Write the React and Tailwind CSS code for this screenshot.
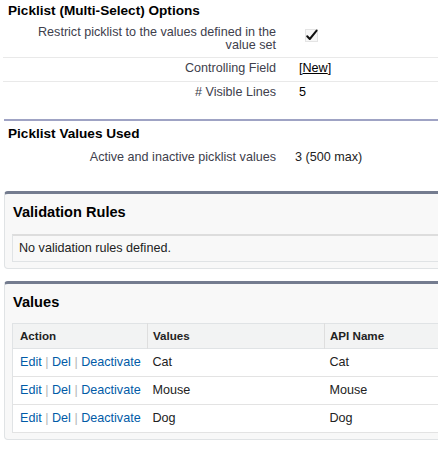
const LINK = "text-[#015ba7]";

const OPTION_ROWS = [
  { label: ["Restrict picklist to the values defined in the", "value set"], value: "check" },
  { label: ["Controlling Field"], value: "new" },
  { label: ["# Visible Lines"], value: "5" },
];

const VALUES = [
  { value: "Cat", api: "Cat" },
  { value: "Mouse", api: "Mouse" },
  { value: "Dog", api: "Dog" },
];

function CheckedBox() {
  return (
    <svg width="15" height="15" viewBox="0 0 15 15" className="block">
      <rect x="1.5" y="1.5" width="12" height="12" fill="#f7f7f7" stroke="#e4e4e4" />
      <path d="M3.2 8.2 L5.8 11 L12.6 2.6" fill="none" stroke="#111" strokeWidth="2" strokeLinecap="round" strokeLinejoin="round" />
    </svg>
  );
}

function OptionValue({ value }) {
  if (value === "check") {
    return (
      <div className="ml-[5px] mt-[4px]">
        <CheckedBox />
      </div>
    );
  }
  if (value === "new") {
    return (
      <span>
        [<span className="underline">New</span>]
      </span>
    );
  }
  return <span>{value}</span>;
}

function BoxTitle({ children }) {
  return <h2 className="pl-[8px] pt-[9px] text-[14.6px] leading-[18px] font-bold text-black">{children}</h2>;
}

export default function App() {
  return (
    <div className="w-[438px] h-[449px] overflow-hidden bg-white font-['Liberation_Sans',Arial,sans-serif]">
      {/* Picklist options */}
      <h3 className="pl-[8px] pt-[2px] text-[13.6px] leading-[18px] font-bold text-black">
        Picklist (Multi-Select) Options
      </h3>
      <div className="ml-[3px] mt-[1px]">
        {OPTION_ROWS.map((row, i) => (
          <div
            key={i}
            className={`grid grid-cols-[280px_1fr] ${i < OPTION_ROWS.length - 1 ? "border-b border-[#e9e9e9]" : ""}`}
          >
            <div
              className={`pr-[7px] text-right text-[12.6px] leading-[13px] text-[#40404c] ${
                i === 0 ? "pt-[5px] pb-[5px]" : "pt-[4px] pb-[6px]"
              }`}
            >
              {row.label.map((l) => (
                <div key={l}>{l}</div>
              ))}
            </div>
            <div className="pl-[16px] pt-[3px] text-[12.6px] leading-[15px] text-black">
              <OptionValue value={row.value} />
            </div>
          </div>
        ))}
      </div>

      {/* Picklist values used */}
      <div className="ml-[4px] mt-[14px] border-t-2 border-[#9fa3c4]">
        <h3 className="pl-[4px] pt-[4px] text-[13.6px] leading-[18px] font-bold text-black">Picklist Values Used</h3>
        <div className="grid grid-cols-[279px_1fr] mt-[8px]">
          <div className="pr-[7px] text-right text-[12.6px] leading-[13px] text-[#40404c]">
            Active and inactive picklist values
          </div>
          <div className="pl-[12px] text-[12.6px] leading-[13px] text-[#222]">3 (500 max)</div>
        </div>
      </div>

      {/* Validation rules */}
      <div className="ml-[4px] mt-[27px] w-[460px] rounded-[4px] border border-t-[3px] border-[#e0e3e5] border-t-[#747c8f] bg-[#f8f8f8]">
        <BoxTitle>Validation Rules</BoxTitle>
        <div className="mx-[7px] mt-[13px] mb-[6px] border border-[#e0e3e5] border-t-2 border-t-[#dddddd] bg-[#f8f8f8] pl-[6px] pt-[4px] pb-[5px] text-[12.6px] leading-[16px] text-[#222]">
          No validation rules defined.
        </div>
      </div>

      {/* Values */}
      <div className="ml-[4px] mt-[12px] w-[460px] rounded-[4px] border border-t-[3px] border-[#e0e3e5] border-t-[#747c8f] bg-[#f8f8f8]">
        <BoxTitle>Values</BoxTitle>
        <div className="mx-[7px] mt-[12px] mb-[6px]">
          <table className="w-full border-collapse border border-[#e0e3e5] bg-white text-left">
            <thead>
              <tr className="h-[25px] bg-[#f2f3f3] border-b border-[#e0e3e5]">
                <th className="w-[135px] pl-[7px] text-[11.6px] font-bold text-[#222]">Action</th>
                <th className="w-[177px] pl-[5px] border-l border-[#dedede] text-[11.6px] font-bold text-[#222]">Values</th>
                <th className="pl-[5px] border-l border-[#dedede] text-[11.6px] font-bold text-[#222]">API Name</th>
              </tr>
            </thead>
            <tbody>
              {VALUES.map((v) => (
                <tr key={v.value} className="h-[28px] border-b border-[#e3e3e3] text-[12.6px] text-[#222]">
                  <td className="pl-[7px] whitespace-nowrap">
                    <span className={LINK}>Edit</span>
                    <span className="text-[#b5b5b5]"> | </span>
                    <span className={LINK}>Del</span>
                    <span className="text-[#b5b5b5]"> | </span>
                    <span className={LINK}>Deactivate</span>
                  </td>
                  <td className="pl-[5px]">{v.value}</td>
                  <td className="pl-[5px]">{v.api}</td>
                </tr>
              ))}
            </tbody>
          </table>
        </div>
      </div>
    </div>
  );
}
